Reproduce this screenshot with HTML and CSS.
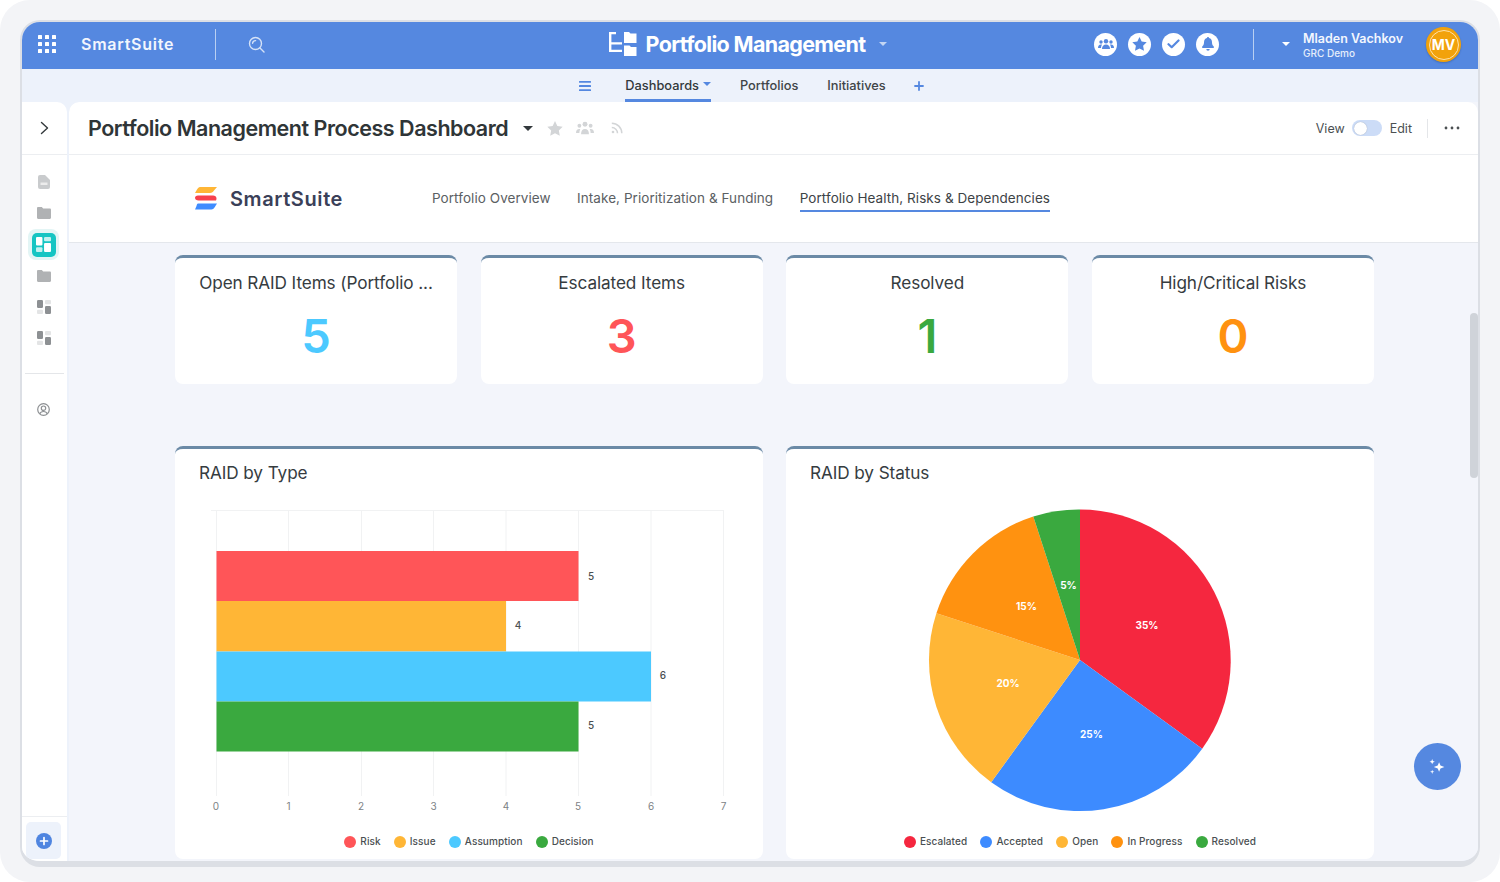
FILE: index.html
```html
<!DOCTYPE html>
<html lang="en">
<head>
<meta charset="utf-8">
<title>Portfolio Management Process Dashboard</title>
<link rel="stylesheet" href="styles.css">
</head>
<body>
<div class="shot">
  <div class="window">
    <header class="topbar">
      <div class="top-left">
        <svg class="apps" width="18" height="18" viewBox="0 0 18 18" fill="#fff"><rect x="0" y="0" width="4" height="4" rx=".6"/><rect x="7" y="0" width="4" height="4" rx=".6"/><rect x="14" y="0" width="4" height="4" rx=".6"/><rect x="0" y="7" width="4" height="4" rx=".6"/><rect x="7" y="7" width="4" height="4" rx=".6"/><rect x="14" y="7" width="4" height="4" rx=".6"/><rect x="0" y="14" width="4" height="4" rx=".6"/><rect x="7" y="14" width="4" height="4" rx=".6"/><rect x="14" y="14" width="4" height="4" rx=".6"/></svg>
        <span class="brand">SmartSuite</span>
        <span class="vline"></span>
        <svg class="search" width="17" height="17" viewBox="0 0 17 17" fill="none" stroke="#d5e2f7" stroke-width="1.4" stroke-linecap="round"><circle cx="7.5" cy="7.5" r="6"/><path d="M12 12l4 4M4.600 7.200a3 3 0 0 1 3-2.600"/></svg>
      </div>
      <div class="top-center">
        <svg width="28" height="24" viewBox="0 0 28 24" fill="#fff"><path d="M0 0h7v2.200H2.400v8H13v2.200H2.400v5.400H13V20H0z"/><path d="M15 0h5l1.500 1.500H27.500V11H15z"/><path d="M15 13.500h5.500l1.500 1.500h5.500V24H15z"/></svg>
        <span class="app-title">Portfolio Management</span>
        <span class="caret caret-pale"></span>
      </div>
      <div class="top-right">
        <span class="round"><svg width="16" height="12" viewBox="0 0 16 12" fill="#5588e0"><circle cx="8" cy="3.200" r="2.200"/><circle cx="3" cy="4" r="1.700"/><circle cx="13" cy="4" r="1.700"/><path d="M4 11c0-3 1.600-4.600 4-4.600S12 8 12 11z"/><path d="M0 10c0-2.400 1-3.600 3-3.600.4 0 .7 0 1 .2C3.300 7.600 3 9 3 10zM16 10c0-2.400-1-3.600-3-3.600-.4 0-.7 0-1 .2.700 1 1 2.400 1 3.400z"/></svg></span>
        <span class="round"><svg width="15" height="14" viewBox="0 0 15 14" fill="#5588e0"><path d="M7.500 0l2.200 4.600 5 .7-3.600 3.500.9 5-4.500-2.400L3 13.800l.9-5L.3 5.300l5-.7z"/></svg></span>
        <span class="round"><svg width="13" height="10" viewBox="0 0 13 10" fill="none" stroke="#5588e0" stroke-width="2.200" stroke-linecap="round" stroke-linejoin="round"><path d="M1.500 5.200l3.200 3L11.500 1.500"/></svg></span>
        <span class="round"><svg width="12" height="14" viewBox="0 0 12 14" fill="#5588e0"><path d="M6 0c.7 0 1 .5 1 1 2 .5 3 2 3 4.200 0 2.300.8 3.300 1.800 4.300V11H.2V9.500C1.200 8.500 2 7.500 2 5.200 2 3 3 1.500 5 1c0-.5.3-1 1-1z"/><path d="M4.300 12h3.400a1.700 1.700 0 0 1-3.400 0z"/></svg></span>
        <span class="vline vline-right"></span>
        <span class="caret caret-white"></span>
        <div class="user">
          <span class="user-name">Mladen Vachkov</span>
          <span class="user-org">GRC Demo</span>
        </div>
        <span class="avatar"><span class="avatar-ring">MV</span></span>
      </div>
    </header>

    <nav class="subnav">
      <svg class="burger" width="12" height="10" viewBox="0 0 12 10" fill="#5588e0"><rect width="12" height="1.800" rx=".5"/><rect y="4.100" width="12" height="1.800" rx=".5"/><rect y="8.200" width="12" height="1.800" rx=".5"/></svg>
      <a class="sub-item sub-active">Dashboards<span class="caret caret-blue"></span></a>
      <a class="sub-item">Portfolios</a>
      <a class="sub-item">Initiatives</a>
      <svg class="sub-plus" width="10" height="10" viewBox="0 0 10 10" stroke="#5588e0" stroke-width="1.800" stroke-linecap="round"><path d="M5 1v8M1 5h8"/></svg>
    </nav>

    <div class="main">
      <aside class="rail">
        <div class="rail-top">
          <svg width="9" height="14" viewBox="0 0 9 14" fill="none" stroke="#33393c" stroke-width="1.400" stroke-linecap="round" stroke-linejoin="round"><path d="M1.500 1.500L7.500 7l-6 5.500"/></svg>
        </div>
        <div class="rail-icons">
          <span class="rail-icon"><svg width="12" height="14" viewBox="0 0 12 14" fill="#c9cbcd"><path d="M2 0h5l5 5v7a2 2 0 0 1-2 2H2a2 2 0 0 1-2-2V2a2 2 0 0 1 2-2z"/><rect x="2.500" y="7.500" width="7" height="2.500" fill="#ececec"/></svg></span>
          <span class="rail-icon"><svg width="14" height="12" viewBox="0 0 14 12" fill="#b0b2b4"><path d="M0 1.200C0 .5.500 0 1.200 0h3.600l1.400 1.600h6.600c.7 0 1.200.5 1.200 1.200v8c0 .7-.5 1.200-1.200 1.200H1.200C.5 12 0 11.500 0 10.800z"/></svg></span>
          <span class="rail-active"><span class="rail-tile"><svg width="15" height="15" viewBox="0 0 14 14" fill="#fff"><rect width="6" height="8" rx="1"/><rect y="9.500" width="6" height="4.500" rx="1" opacity=".75"/><rect x="7.500" width="6.500" height="4" rx="1" opacity=".75"/><rect x="7.500" y="5.500" width="6.500" height="8.500" rx="1"/></svg></span></span>
          <span class="rail-icon"><svg width="14" height="12" viewBox="0 0 14 12" fill="#b0b2b4"><path d="M0 1.200C0 .5.500 0 1.200 0h3.600l1.400 1.600h6.600c.7 0 1.200.5 1.200 1.200v8c0 .7-.5 1.200-1.200 1.200H1.200C.5 12 0 11.500 0 10.800z"/></svg></span>
          <span class="rail-icon"><svg width="14" height="14" viewBox="0 0 14 14"><rect width="6" height="8" rx="1.200" fill="#8d9093"/><rect y="9.800" width="6" height="4.200" rx="1" fill="#e3e4e5"/><rect x="8" width="6" height="4.200" rx="1" fill="#e3e4e5"/><rect x="8" y="6" width="6" height="8" rx="1.200" fill="#8d9093"/></svg></span>
          <span class="rail-icon"><svg width="14" height="14" viewBox="0 0 14 14"><rect width="6" height="8" rx="1.200" fill="#8d9093"/><rect y="9.800" width="6" height="4.200" rx="1" fill="#e3e4e5"/><rect x="8" width="6" height="4.200" rx="1" fill="#e3e4e5"/><rect x="8" y="6" width="6" height="8" rx="1.200" fill="#8d9093"/></svg></span>
        </div>
        <div class="rail-rule"></div>
        <span class="rail-icon rail-profile"><svg width="13" height="13" viewBox="0 0 13 13" fill="none" stroke="#8d9093" stroke-width="1.200"><circle cx="6.500" cy="6.500" r="5.800"/><circle cx="6.500" cy="5.200" r="2.200"/><path d="M2.800 10.800c.6-1.700 2-2.300 3.700-2.300s3.100.6 3.700 2.300"/></svg></span>
        <div class="rail-bottom">
          <span class="add-box"><svg width="16" height="16" viewBox="0 0 16 16"><circle cx="8" cy="8" r="8" fill="#4f85e0"/><path d="M8 4.500v7M4.500 8h7" stroke="#fff" stroke-width="1.700" stroke-linecap="round"/></svg></span>
        </div>
      </aside>

      <section class="content">
        <header class="page-head">
          <h1 class="page-title">Portfolio Management Process Dashboard</h1>
          <span class="caret caret-dark"></span>
          <svg class="ph-star" width="16" height="15" viewBox="0 0 15 14" fill="#d3d5d7"><path d="M7.500 0l2.200 4.600 5 .7-3.600 3.500.9 5-4.500-2.400L3 13.800l.9-5L.3 5.300l5-.7z"/></svg>
          <svg class="ph-team" width="18" height="14" viewBox="0 0 16 12" fill="#d3d5d7"><circle cx="8" cy="2.600" r="2.200"/><circle cx="3" cy="4" r="1.700"/><circle cx="13" cy="4" r="1.700"/><path d="M4.500 11.500c0-3 1.300-4.600 3.500-4.600s3.500 1.600 3.500 4.600z"/><path d="M0 10.500c0-2.400 1-3.600 3-3.600.3 0 .6 0 .8.100-.6 1-.8 2.200-.8 3.500zM16 10.500c0-2.400-1-3.600-3-3.600-.3 0-.6 0-.8.100.6 1 .8 2.200.8 3.500z"/></svg>
          <svg class="ph-rss" width="12" height="12" viewBox="0 0 12 12" fill="none" stroke="#d3d5d7" stroke-width="1.500"><circle cx="2" cy="10" r="1.300" fill="#d3d5d7" stroke="none"/><path d="M.8 5.500a5.700 5.700 0 0 1 5.700 5.700M.8 1.200a10 10 0 0 1 10 10"/></svg>
          <div class="ph-right">
            <span class="ph-label">View</span>
            <span class="toggle"><span class="knob"></span></span>
            <span class="ph-label">Edit</span>
            <span class="ph-rule"></span>
            <svg width="16" height="4" viewBox="0 0 16 4" fill="#4b5052"><circle cx="2" cy="2" r="1.400"/><circle cx="8" cy="2" r="1.400"/><circle cx="14" cy="2" r="1.400"/></svg>
          </div>
        </header>

        <div class="dash-nav">
          <div class="logo">
            <svg width="22" height="23" viewBox="0 0 22 23"><path d="M5 0h17l-3 3.500C18 5 17 6 15 6H0l2-3.500C3 1 3.800 0 5 0z" fill="#ffb636"/><path d="M3 8.500h15c2 0 3.500 1 3.500 3 0 .8-.2 1.500-.5 2H3.500C1.500 13.500 0 12.500 0 10.800c0-.8 1-2.300 3-2.300z" fill="#f7414d"/><path d="M3 16.500h19l-2.500 4c-.8 1.300-1.800 2-3 2H0l1.500-3.500c.4-1.500.6-2.500 1.500-2.500z" fill="#3f8cff"/></svg>
            <span class="logo-text">SmartSuite</span>
          </div>
          <div class="dash-tabs">
            <a class="dash-tab">Portfolio Overview</a>
            <a class="dash-tab">Intake, Prioritization &amp; Funding</a>
            <a class="dash-tab dash-tab-active">Portfolio Health, Risks &amp; Dependencies</a>
          </div>
        </div>

        <div class="board">
          <div class="kpis">
            <article class="kpi"><h2 class="kpi-title">Open RAID Items (Portfolio ...</h2><div class="kpi-val val-blue">5</div></article>
            <article class="kpi"><h2 class="kpi-title">Escalated Items</h2><div class="kpi-val val-red">3</div></article>
            <article class="kpi"><h2 class="kpi-title">Resolved</h2><div class="kpi-val val-green">1</div></article>
            <article class="kpi"><h2 class="kpi-title">High/Critical Risks</h2><div class="kpi-val val-orange">0</div></article>
          </div>
          <div class="charts">
            <article class="chart">
              <h2 class="chart-title">RAID by Type</h2>
              <svg class="chart-svg" width="588" height="320" viewBox="175 500 588 320">
                <g class="grid">
                  <path d="M211 510.500H724"/>
                  <path d="M216.500 510V796M288.500 510V796M361.500 510V796M433.500 510V796M506 510V796M578.500 510V796M651 510V796M723.500 510V796"/>
                </g>
                <rect x="216.500" y="551" width="362" height="50" class="f-red"/>
                <rect x="216.500" y="601" width="289.500" height="50.500" class="f-amber"/>
                <rect x="216.500" y="651.500" width="434.500" height="50" class="f-sky"/>
                <rect x="216.500" y="701.500" width="362" height="50" class="f-green"/>
                <g class="bar-val">
                  <text x="591" y="579.500">5</text><text x="518" y="629">4</text><text x="663" y="679">6</text><text x="591" y="728.500">5</text>
                </g>
                <g class="axis-val">
                  <text x="216" y="810">0</text><text x="288.500" y="810">1</text><text x="361" y="810">2</text><text x="433.500" y="810">3</text><text x="506" y="810">4</text><text x="578" y="810">5</text><text x="651" y="810">6</text><text x="723.500" y="810">7</text>
                </g>
              </svg>
              <div class="legend">
                <span class="leg"><i class="dot f-bg-red"></i>Risk</span>
                <span class="leg"><i class="dot f-bg-amber"></i>Issue</span>
                <span class="leg"><i class="dot f-bg-sky"></i>Assumption</span>
                <span class="leg"><i class="dot f-bg-green"></i>Decision</span>
              </div>
            </article>
            <article class="chart">
              <h2 class="chart-title">RAID by Status</h2>
              <svg class="chart-svg" width="588" height="320" viewBox="786 500 588 320">
                <path d="M1080 660V509.500A151 151 0 0 1 1202.200 748.800z" class="p-red"/>
                <path d="M1080 660L1202.200 748.800A151 151 0 0 1 991.200 782.200z" class="p-blue"/>
                <path d="M1080 660L991.200 782.200A151 151 0 0 1 936.400 613.300z" class="f-amber"/>
                <path d="M1080 660L936.400 613.300A151 151 0 0 1 1033.300 516.400z" class="p-orange"/>
                <path d="M1080 660L1033.300 516.400A151 151 0 0 1 1080 509.500z" class="f-green"/>
                <g class="pie-val">
                  <text x="1147" y="629">35%</text><text x="1091.500" y="738">25%</text><text x="1008" y="687">20%</text><text x="1026.500" y="610">15%</text><text x="1068.500" y="588.500">5%</text>
                </g>
              </svg>
              <div class="legend">
                <span class="leg"><i class="dot p-bg-red"></i>Escalated</span>
                <span class="leg"><i class="dot p-bg-blue"></i>Accepted</span>
                <span class="leg"><i class="dot f-bg-amber"></i>Open</span>
                <span class="leg"><i class="dot p-bg-orange"></i>In Progress</span>
                <span class="leg"><i class="dot f-bg-green"></i>Resolved</span>
              </div>
            </article>
          </div>
        </div>
        <span class="scrollbar"></span>
        <span class="fab"><svg width="17" height="16" viewBox="0 0 16 15" fill="#fff"><path d="M9.500 3l1.300 3.200L14.500 7.500l-3.700 1.300L9.500 12 8.200 8.800 4.500 7.500l3.700-1.300z"/><path d="M3 0l.7 1.800L5.500 2.500 3.700 3.200 3 5 2.300 3.200.5 2.500l1.800-.7z"/><path d="M3 10l.5 1.500L5 12l-1.500.5L3 14l-.5-1.500L1 12l1.500-.5z"/></svg></span>
      </section>
    </div>
  </div>
</div>
</body>
</html>
```

FILE: styles.css
```css
* { box-sizing: border-box; }
html, body { margin: 0; padding: 0; background: #fff; }
body { font-family: Inter, "Liberation Sans", sans-serif; color: #33393c; overflow: hidden; }
h1, h2 { margin: 0; }
a { color: inherit; text-decoration: none; }

.shot { width: 1500px; height: 882px; background: #f3f4f7; border-radius: 30px; padding: 20px 20px 15px; }
.window { width: 1460px; height: 847px; display: flex; flex-direction: column; border: 2px solid #dcdfe5; border-bottom-width: 6px; border-radius: 20px; overflow: hidden; background: #edf2fb; }

/* top bar */
.topbar { height: 47px; flex: none; background: #5588e0; display: grid; grid-template-columns: 1fr auto 1fr; align-items: center; color: #fff; padding-bottom: 3px; }
.top-left { display: flex; align-items: center; padding-left: 16px; }
.brand { margin-left: 25px; font-size: 16px; font-weight: 600; width: 93px; letter-spacing: .75px; color: #f2f6fd; white-space: nowrap; }
.vline { width: 1px; height: 31px; background: #b9cff2; margin-left: 41px; }
.search { margin-left: 32px; }
.top-center { display: flex; align-items: center; margin-left: -4px; }
.app-title { margin-left: 9px; font-size: 21.500px; font-weight: 700; letter-spacing: -.66px; }
.top-right { display: flex; align-items: center; justify-content: flex-end; padding-right: 17px; }
.round { width: 23px; height: 23px; border-radius: 50%; background: #fff; display: flex; align-items: center; justify-content: center; margin-right: 11px; }
.vline-right { margin-left: 23px; }
.user { margin-left: 13px; width: 123px; display: flex; flex-direction: column; gap: 1px; position: relative; top: 1px; }
.user-name { font-size: 12.500px; font-weight: 600; line-height: 15px; color: #f3f7fe; }
.user-org { font-size: 10px; font-weight: 500; line-height: 12px; color: #e6eefb; }
.avatar { width: 35px; height: 35px; border-radius: 50%; background: #f2a20c; display: flex; align-items: center; justify-content: center; box-shadow: 0 1px 2px rgba(0,0,0,.2); margin-top: 1px; }
.avatar-ring { width: 30px; height: 30px; border: 1px solid #ffe3ad; border-radius: 50%; display: flex; align-items: center; justify-content: center; font-size: 14px; font-weight: 700; color: #fff; }

.caret { display: inline-block; width: 0; height: 0; border-left: 4.500px solid transparent; border-right: 4.500px solid transparent; border-top: 4px solid #fff; }
.caret-pale { margin-left: 14px; border-top-color: #c3d5f3; }
.caret-white { margin-left: 28px; }
.caret-blue { margin-left: 4px; border-top-color: #5588e0; position: relative; top: -2px; }
.caret-dark { margin-left: 15px; border-left-width: 5px; border-right-width: 5px; border-top: 5px solid #33393c; }

/* sub nav */
.subnav { height: 33px; flex: none; display: flex; align-items: stretch; justify-content: center; font-size: 12.800px; font-weight: 500; padding-left: 3px; }
.burger { align-self: center; margin-right: 34px; }
.sub-item { display: flex; align-items: center; margin-right: 29px; color: #3f4548; border-bottom: 3px solid transparent; padding-top: 3px; }
.sub-active { border-bottom-color: #5588e0; color: #33393c; }
.sub-plus { align-self: center; margin-left: -1px; }

/* main area */
.main { flex: 1; min-height: 0; display: flex; gap: 2px; }
.rail { width: 45px; flex: none; background: #fff; border-radius: 0 10px 0 0; display: flex; flex-direction: column; align-items: center; }
.rail-top { width: 100%; height: 53px; display: flex; align-items: center; justify-content: center; border-bottom: 1px solid #eceef1; flex: none; }
.rail-icons { display: flex; flex-direction: column; align-items: center; gap: 7px; margin: 15px 2px 0 0; }
.rail-icon { width: 24px; height: 24px; display: flex; align-items: center; justify-content: center; }
.rail-profile { margin-right: 2px; }
.rail-active { width: 31px; height: 31px; display: flex; align-items: center; justify-content: center; background: #e3f5f5; border-radius: 8px; margin: -3px 0; }
.rail-tile { width: 24px; height: 24px; background: #16c5c3; border-radius: 5px; display: flex; align-items: center; justify-content: center; }
.rail-rule { width: 39px; height: 1px; background: #e4e6e9; margin: 23px 0 23px; flex: none; }
.rail-bottom { margin-top: auto; width: 100%; border-top: 1px solid #eceef1; padding: 5px 6px 2px 4px; flex: none; }
.add-box { height: 37px; background: #edf2fb; border-radius: 5px; display: flex; align-items: center; justify-content: center; }

.content { flex: 1; min-width: 0; position: relative; background: #f3f5fb; border-radius: 10px 0 0 0; overflow: hidden; display: flex; flex-direction: column; }

.page-head { height: 53px; flex: none; background: #fff; border-bottom: 1px solid #eceef1; display: flex; align-items: center; padding: 0 18px 0 19px; border-radius: 10px 10px 0 0; }
.page-title { font-size: 21.500px; font-weight: 600; letter-spacing: -.47px; color: #2f3537; white-space: nowrap; }
.ph-star { margin-left: 14px; }
.ph-team { margin-left: 13px; }
.ph-rss { margin-left: 17px; }
.ph-right { margin-left: auto; display: flex; align-items: center; }
.ph-label { font-size: 12.500px; color: #4b5052; }
.toggle { width: 30px; height: 16px; border-radius: 8px; background: #ccdcf7; margin: 0 8px 0 7px; display: flex; align-items: center; padding-left: 2px; }
.knob { width: 13px; height: 13px; border-radius: 50%; background: #fff; box-shadow: 0 0 1px rgba(0,0,0,.3); }
.ph-rule { width: 1px; height: 19px; background: #e4e6e9; margin: 0 16px 0 15px; }

.dash-nav { height: 88px; flex: none; background: #fff; border-bottom: 1px solid #e4e7ec; display: flex; align-items: center; padding-left: 126px; }
.logo { display: flex; align-items: center; width: 237px; }
.logo-text { margin-left: 13px; font-size: 20px; font-weight: 600; letter-spacing: .6px; color: #3a4058; }
.dash-tabs { display: flex; gap: 26.500px; }
.dash-tab { font-size: 13.500px; color: #5b6063; padding: 4px 0 4px; border-bottom: 2px solid transparent; letter-spacing: .06px; }
.dash-tab-active { color: #3d4346; border-bottom-color: #5588e0; }

.board { flex: 1; min-height: 0; padding: 12px 104px 0 106px; display: flex; flex-direction: column; gap: 62px; overflow: hidden; }
.kpis { display: grid; grid-template-columns: repeat(4, 1fr); gap: 23.700px; flex: none; }
.kpi, .chart { background: #fff; border-top: 3px solid #6b8aa6; border-radius: 8px; }
.kpi { height: 129px; padding: 14px 16px 0; text-align: center; }
.kpi-title { font-size: 17.200px; font-weight: 400; line-height: 22px; color: #363c3f; white-space: nowrap; letter-spacing: -.1px; }
.kpi-val { margin-top: 14px; font-size: 47px; font-weight: 600; line-height: 56px; }
.val-blue { color: #4cc9ff; }
.val-red { color: #ff5558; }
.val-green { color: #3aa93f; }
.val-orange { color: #ff9210; }

.charts { display: grid; grid-template-columns: repeat(2, 1fr); gap: 23px; flex: none; }
.chart { height: 413px; position: relative; padding-top: 13px; }
.chart-title { padding-left: 24px; font-size: 17.200px; font-weight: 400; line-height: 22px; color: #363c3f; letter-spacing: -.1px; }
.chart-svg { display: block; margin-top: 16px; }
.grid path { fill: none; stroke: #f1f2f3; stroke-width: 1; }
.f-red { fill: #ff5558; }
.f-amber { fill: #ffb636; }
.f-sky { fill: #4cc9ff; }
.f-green { fill: #3aa93f; }
.p-red { fill: #f5273f; }
.p-blue { fill: #3d8bff; }
.p-orange { fill: #ff9210; }
.bar-val text { font-size: 10px; font-weight: 500; fill: #4b5052; text-anchor: middle; }
.axis-val text { font-size: 10px; fill: #7d8285; text-anchor: middle; }
.pie-val text { font-size: 10px; font-weight: 700; fill: #fff; text-anchor: middle; }

.legend { position: absolute; left: 0; right: 0; top: 386px; display: flex; justify-content: center; gap: 13.200px; font-size: 10px; font-weight: 500; letter-spacing: .08px; color: #4a4f52; }
.leg { display: flex; align-items: center; gap: 4px; line-height: 13px; }
.dot { width: 12px; height: 12px; border-radius: 50%; display: block; }
.f-bg-red { background: #ff5558; }
.f-bg-amber { background: #ffb636; }
.f-bg-sky { background: #4cc9ff; }
.f-bg-green { background: #3aa93f; }
.p-bg-red { background: #f5273f; }
.p-bg-blue { background: #3d8bff; }
.p-bg-orange { background: #ff9210; }

.scrollbar { position: absolute; right: 0; top: 211px; width: 8px; height: 165px; background: #cfd3d9; border-radius: 4px; }
.fab { position: absolute; left: 1345px; top: 641px; width: 47px; height: 47px; border-radius: 50%; background: #5588e0; display: flex; align-items: center; justify-content: center; }
```
